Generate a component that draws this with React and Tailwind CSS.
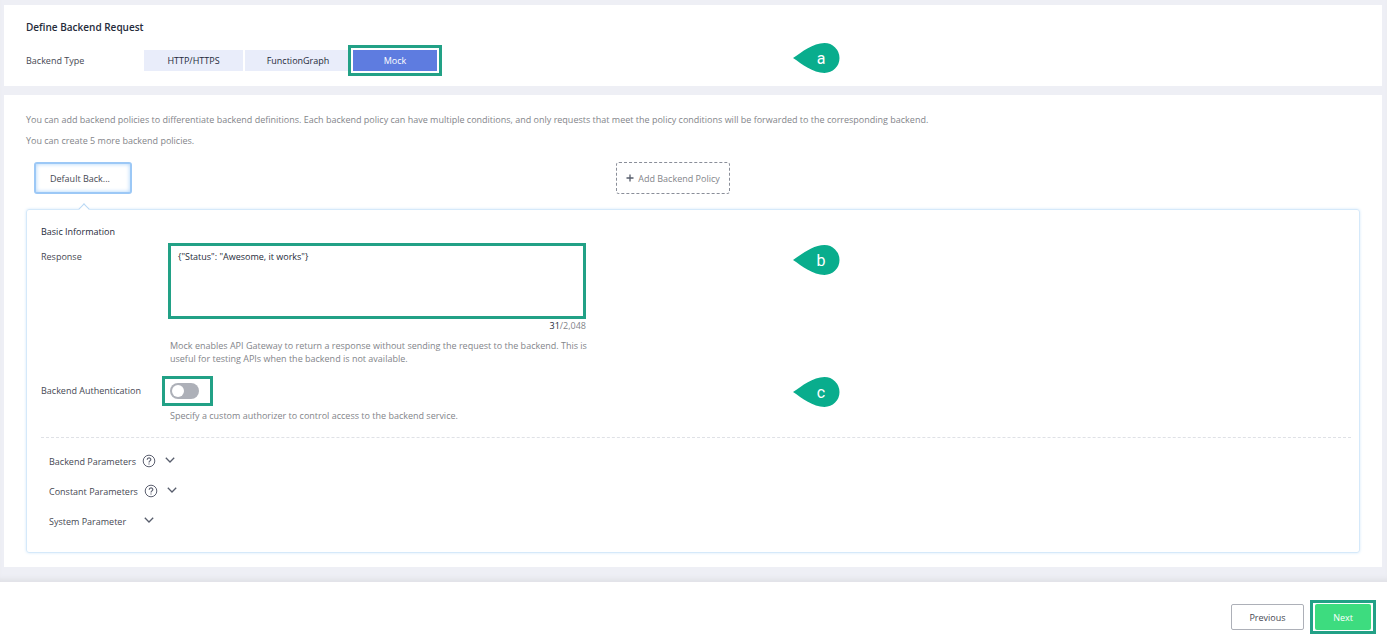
import { useState } from 'react'

const BACKEND_TYPES = [
  { id: 'http', label: 'HTTP/HTTPS', width: 'w-[99px]' },
  { id: 'graph', label: 'FunctionGraph', width: 'w-[106px]' },
  { id: 'mock', label: 'Mock', width: 'w-[84px]' },
]

const PARAM_SECTIONS = [
  { label: 'Backend Parameters', help: true },
  { label: 'Constant Parameters', help: true },
  { label: 'System Parameter', help: false },
]

// Teardrop pointing left, with the step letter in it
function StepMarker({ letter, className }) {
  return (
    <div className={`absolute w-[47px] h-[30px] ${className}`}>
      <svg viewBox="0 0 47 30" className="absolute inset-0 w-full h-full" aria-hidden="true">
        <path d="M0 15 C9 9 20 0 31.500 0 A15 15 0 0 1 31.500 30 C20 30 9 21 0 15 Z" fill="#09ad8d" />
      </svg>
      <span className="absolute inset-y-0 left-[19px] w-[18px] pt-0.5 flex items-center justify-center font-['Roboto',sans-serif] text-base text-white">
        {letter}
      </span>
    </div>
  )
}

function HelpIcon() {
  return (
    <svg viewBox="0 0 14 14" className="w-[14px] h-[14px]" fill="none" stroke="#5c6070" aria-hidden="true">
      <circle cx="7" cy="7" r="5.800" />
      <path d="M5.200 5.800 C5.200 3.200 8.900 3.400 8.800 5.600 C8.700 6.900 7 6.900 7 8.400" strokeWidth="1.200" />
      <path d="M7 9.400 V10.600" strokeWidth="1.200" />
    </svg>
  )
}

function Chevron({ className }) {
  return (
    <svg viewBox="0 0 10 14" className={`w-[10px] h-[14px] ${className}`} fill="none" stroke="#575d6c" strokeWidth="1.300" aria-hidden="true">
      <path d="M0.800 3.800 L5 8 L9.200 3.800" />
    </svg>
  )
}

function PlusIcon() {
  return (
    <svg viewBox="0 0 8 8" className="w-2 h-2" stroke="#575d6c" strokeWidth="1.300" aria-hidden="true">
      <path d="M4 0.500 V7.500 M0.500 4 H7.500" />
    </svg>
  )
}

export default function App() {
  const [backendType, setBackendType] = useState('mock')
  const [response, setResponse] = useState('{"Status": "Awesome, it works"}')
  const [auth, setAuth] = useState(false)

  return (
    <div className="min-h-screen flex flex-col bg-[#eeeff5] font-['Open_Sans','Noto_Sans',sans-serif] text-[9px] leading-[13px] text-[#464853]">
      <main className="flex flex-col gap-[9px] pl-1 pr-[5px] pt-[5px] pb-[15px] shadow-[inset_0_-6px_5px_-3px_#e0e1e6]">
        {/* Backend type */}
        <section className="relative bg-white px-[22px] pt-4 pb-[15px]">
          <h2 className="text-[10px] font-semibold text-[#252b3a]">Define Backend Request</h2>
          <div className="flex items-center mt-4">
            <span className="w-[118px]">Backend Type</span>
            <div className="flex gap-0.5">
              {BACKEND_TYPES.map((t) => (
                <button
                  key={t.id}
                  onClick={() => setBackendType(t.id)}
                  className={`relative h-[21px] ${t.width} ${
                    backendType === t.id ? 'bg-[#5e7ce0] text-white' : 'bg-[#e9edfa] text-[#252b3a]'
                  }`}
                >
                  {t.label}
                  {t.id === 'mock' && (
                    <span className="absolute -inset-[5px] border-3 border-[#22a186] pointer-events-none" />
                  )}
                </button>
              ))}
            </div>
          </div>
          <StepMarker letter="a" className="left-[789px] top-[38px]" />
        </section>

        {/* Policies */}
        <section className="bg-white px-[22px] pt-[18px] pb-[14px]">
          <p className="text-[#83858a]">
            You can add backend policies to differentiate backend definitions. Each backend policy can have multiple conditions, and only requests that meet the policy conditions will be forwarded to the corresponding backend.
          </p>
          <p className="mt-2 text-[#83858a]">You can create 5 more backend policies.</p>

          <div className="flex mt-[15px] pl-2">
            <button className="w-[98px] h-8 pl-3.5 text-left border-2 border-[#9cc8f6] rounded-[3px] shadow-[inset_0_0_4px_#a9d1fa]">
              Default Back...
            </button>
            <button className="ml-[484px] w-[114px] h-8 flex items-center justify-center gap-1 border border-dashed border-[#8a8e99] rounded-[3px] text-[#83858a]">
              <PlusIcon />
              Add Backend Policy
            </button>
          </div>

          <div className="relative mt-[15px] pl-[14px] pr-2 pt-[15px] pb-[24px] border border-[#d5e9fa] rounded-[3px] shadow-[0_0_3px_#d5e9fa]">
            <span className="absolute left-[53px] -top-[5px] w-2 h-2 rotate-45 bg-white border-l border-t border-[#b9d8f5]" />

            <h3 className="text-[#252b3a]">Basic Information</h3>

            <div className="flex mt-[5px]">
              <label htmlFor="response" className="w-[127px] pt-[7px]">Response</label>
              <div>
                <textarea
                  id="response"
                  value={response}
                  onChange={(e) => setResponse(e.target.value)}
                  className="block w-[418px] h-[76px] px-[7px] py-1 border-3 border-[#22a186] resize-none outline-none text-[#252b3a]"
                />
                <p className="w-[418px] text-right text-[#83858a]">
                  <span className="text-[#252b3a]">{response.length}</span>/2,048
                </p>
                <p className="max-w-[430px] mt-[7px] pl-0.5 text-[#83858a]">
                  Mock enables API Gateway to return a response without sending the request to the backend. This is useful for testing APIs when the backend is not available.
                </p>
              </div>
            </div>

            <div className="flex mt-[11px]">
              <label htmlFor="auth" className="w-[121px] pt-2">Backend Authentication</label>
              <div>
                <div className="w-[51px] h-[30px] flex items-center pl-[5px] border-3 border-[#22a186]">
                  <input
                    id="auth"
                    type="checkbox"
                    role="switch"
                    checked={auth}
                    onChange={(e) => setAuth(e.target.checked)}
                    className="appearance-none w-[29px] h-4 p-0.5 rounded-full bg-[#adb0b8] checked:bg-[#5e7ce0] before:block before:w-3 before:h-3 before:rounded-full before:bg-white checked:before:translate-x-[13px]"
                  />
                </div>
                <p className="mt-[3px] pl-2 text-[#83858a]">
                  Specify a custom authorizer to control access to the backend service.
                </p>
              </div>
            </div>

            <hr className="mt-[15px] border-dashed border-[#dfe1e6]" />

            <div className="flex flex-col items-start gap-4 mt-4 pl-2">
              {PARAM_SECTIONS.map((s) => (
                <button key={s.label} className="h-[14px] flex items-center">
                  {s.label}
                  {s.help && <span className="ml-1.5"><HelpIcon /></span>}
                  <Chevron className={s.help ? 'ml-[9px]' : 'ml-[18px]'} />
                </button>
              ))}
            </div>

            <StepMarker letter="b" className="left-[766px] top-[35px]" />
            <StepMarker letter="c" className="left-[766px] top-[167px]" />
          </div>
        </section>
      </main>

      <footer className="grow flex justify-end items-start gap-[11px] bg-white pt-[22px] pr-4 pb-2">
        <button className="w-[73px] h-[26px] border border-[#adb0b8] rounded-xs">Previous</button>
        <button className="relative w-14 h-[26px] rounded-xs bg-[#3ddc7f] text-white">
          Next
          <span className="absolute -inset-x-[5px] -inset-y-1 border-3 border-[#22a186] pointer-events-none" />
        </button>
      </footer>
    </div>
  )
}
